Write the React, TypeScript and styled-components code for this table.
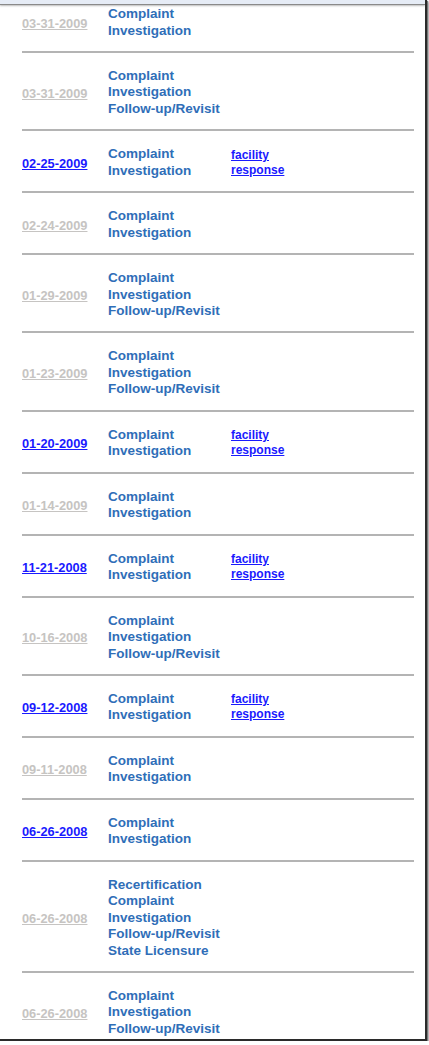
import React from 'react'
import styled, { createGlobalStyle } from 'styled-components'

const Global = createGlobalStyle`
  html, body { margin: 0; padding: 0; background: #fff; }
  body { font-family: "Liberation Sans", Arial, sans-serif; }
`

const Frame = styled.div`
  position: relative;
  width: 425px;
  height: 1039px;
  overflow: hidden;
  background: #fff;
  border-right: 2px solid #2b2b2b;
  border-bottom: 2px solid #2b2b2b;
  box-shadow: 1px 1px 1px #777, 2px 2px 2px #aaa;
`

const TopBar = styled.div`
  position: absolute;
  top: 0;
  left: 0;
  right: 0;
  height: 4px;
  background: #e6ecf6;
  border-bottom: 1px solid #8a8a8a;
  box-shadow: 0 1px 2px #bdbdbd;
  z-index: 2;
`

const List = styled.div`
  margin: -9px 0 0 22px;
  width: 392px;
`

const Row = styled.div`
  display: grid;
  grid-template-columns: 86px 123px 1fr;
  align-items: center;
  padding: 15px 0 11.9px;
  border-bottom: 2px solid #b4b4b4;
`

const DateLink = styled.a<{ $active: boolean }>`
  font-size: 12.8px;
  font-weight: bold;
  color: ${(p) => (p.$active ? '#1a1aff' : '#c6c4c2')};
  text-decoration: underline;
`

const Types = styled.div`
  display: flex;
  flex-direction: column;
  font-size: 13.5px;
  line-height: 16.5px;
  font-weight: bold;
  color: #2f6eb8;
`

const Response = styled.a`
  font-size: 12px;
  line-height: 15px;
  font-weight: bold;
  color: #1a1aff;
  text-decoration: underline;
  display: flex;
  flex-direction: column;
`

const CI = ['Complaint', 'Investigation']
const CIF = ['Complaint', 'Investigation', 'Follow-up/Revisit']

const rows: { date: string; active: boolean; types: string[]; resp?: boolean }[] = [
  { date: '03-31-2009', active: false, types: CI },
  { date: '03-31-2009', active: false, types: CIF },
  { date: '02-25-2009', active: true, types: CI, resp: true },
  { date: '02-24-2009', active: false, types: CI },
  { date: '01-29-2009', active: false, types: CIF },
  { date: '01-23-2009', active: false, types: CIF },
  { date: '01-20-2009', active: true, types: CI, resp: true },
  { date: '01-14-2009', active: false, types: CI },
  { date: '11-21-2008', active: true, types: CI, resp: true },
  { date: '10-16-2008', active: false, types: CIF },
  { date: '09-12-2008', active: true, types: CI, resp: true },
  { date: '09-11-2008', active: false, types: CI },
  { date: '06-26-2008', active: true, types: CI },
  {
    date: '06-26-2008',
    active: false,
    types: ['Recertification', 'Complaint', 'Investigation', 'Follow-up/Revisit', 'State Licensure'],
  },
  { date: '06-26-2008', active: false, types: CIF },
]

export default function App() {
  return (
    <>
      <Global />
      <Frame>
        <TopBar />
        <List>
          {rows.map((r, i) => (
            <Row key={i}>
              <div>
                <DateLink href="#" $active={r.active}>
                  {r.date}
                </DateLink>
              </div>
              <Types>
                {r.types.map((t) => (
                  <span key={t}>{t}</span>
                ))}
              </Types>
              <div>
                {r.resp && (
                  <Response href="#">
                    <span>facility</span>
                    <span>response</span>
                  </Response>
                )}
              </div>
            </Row>
          ))}
        </List>
      </Frame>
    </>
  )
}
